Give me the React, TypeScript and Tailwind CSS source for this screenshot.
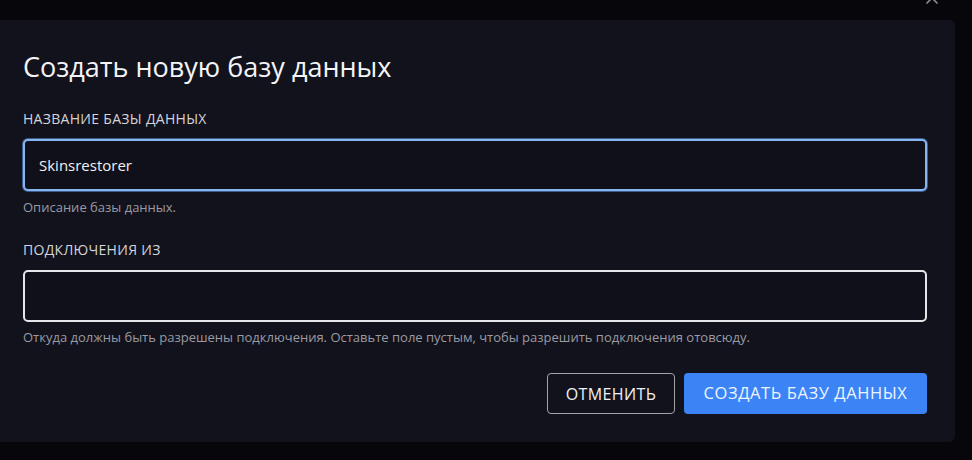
import { X } from "lucide-react";

export default function App() {
  return (
    <div
      className="relative w-[972px] h-[460px] overflow-hidden bg-[#07070b]"
      style={{ fontFamily: '"Open Sans", "Noto Sans", sans-serif' }}
    >
      {/* Close button, mostly off screen */}
      <button
        type="button"
        className="absolute left-[922px] top-[-12px] text-[#8b8b93]"
      >
        <X className="w-[20px] h-[20px]" strokeWidth={2} />
      </button>

      {/* Modal panel */}
      <div className="mt-[20px] w-[955px] rounded-r-md bg-[#12121c] pl-[23px] pr-[28px] pt-[31px] pb-[28px]">
        <h2 className="text-[27px] leading-[32px] text-[#f4f4f6]">
          Создать новую базу данных
        </h2>

        <label className="block mt-[28px] text-[14px] leading-[16px] uppercase tracking-[0.3px] text-[#d4d4da]">
          Название базы данных
        </label>
        <div className="mt-[12px] h-[52px] flex items-center rounded-[5px] border-2 border-[#86b5f0] shadow-[0_0_0_1px_#3d5c8c] bg-[#10101a] px-[14px]">
          <span className="text-[15px] text-[#f1f1f4]">Skinsrestorer</span>
        </div>
        <p className="mt-[8px] text-[13px] leading-[16px] text-[#9a9aa3]">
          Описание базы данных.
        </p>

        <label className="block mt-[27px] text-[14px] leading-[16px] uppercase tracking-[0.3px] text-[#d4d4da]">
          Подключения из
        </label>
        <div className="mt-[12px] h-[52px] rounded-[5px] border-2 border-[#e6e6ea] bg-[#10101a]" />
        <p className="mt-[7px] text-[13px] leading-[16px] text-[#9a9aa3]">
          Откуда должны быть разрешены подключения. Оставьте поле пустым, чтобы
          разрешить подключения отовсюду.
        </p>

        <div className="mt-[28px] flex justify-end gap-[9px]">
          <button
            type="button"
            className="h-[41px] w-[128px] rounded-[4px] border border-[#a3a3aa] text-[16px] tracking-[0.4px] uppercase text-[#f1f1f4]"
          >
            Отменить
          </button>
          <button
            type="button"
            className="h-[41px] w-[243px] rounded-[4px] bg-[#3c84f6] text-[16.5px] tracking-[0.6px] uppercase text-[#eef4ff]"
          >
            Создать базу данных
          </button>
        </div>
      </div>
    </div>
  );
}
